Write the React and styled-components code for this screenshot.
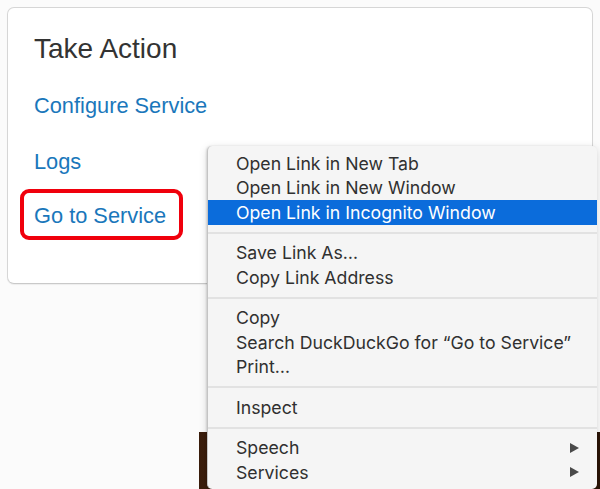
import React from 'react'
import styled, { createGlobalStyle } from 'styled-components';

const GlobalStyle = createGlobalStyle`
  html, body {
    margin: 0;
    padding: 0;
    background: #fbfbfb;
  }
  body {
    font-family: "Liberation Sans", Arial, sans-serif;
  }
`

const Canvas = styled.div`
  position: relative;
  width: 600px;
  height: 489px;
  overflow: hidden;
  padding: 7px 7px 0;
  box-sizing: border-box;
`

const Card = styled.div`
  width: 586px;
  height: 277px;
  box-sizing: border-box;
  background: #fff;
  border: 1px solid #d6d6d6;
  border-bottom-color: #c9c9c9;
  border-radius: 7px;
  box-shadow: 0 1px 1px rgba(0, 0, 0, 0.06);
  padding: 25px 26px 0;
  display: flex;
  flex-direction: column;
  align-items: flex-start;
`

const Title = styled.h3`
  margin: 0 0 29px;
  font-size: 28px;
  line-height: 32px;
  font-weight: 400;
  color: #333;
`

const ActionLink = styled.a`
  display: block;
  font-size: 21.8px;
  line-height: 24px;
  color: #1a77bb;
  text-decoration: none;
  margin-bottom: ${p => p.$gap || 0}px;
  ${p => p.$marked && `
    margin-left: -14px;
    margin-top: -16px;
    padding: 11px 13px 8px 10px;
    border: 4px solid #f0000c;
    border-radius: 9px;
  `}
`

const Backdrop = styled.div`
  position: absolute;
  left: 199px;
  top: 432px;
  width: 401px;
  height: 57px;
  background: linear-gradient(90deg, #3a1d0c, #6a3412 50%, #2a1407);
`

const Menu = styled.ul`
  position: absolute;
  left: 207px;
  top: 146px;
  width: 390px;
  margin: 0;
  padding: 5px 0 4px;
  list-style: none;
  background: #f5f5f5;
  border-left: 1px solid #c4c4c4;
  border-radius: 5px;
  box-shadow: -1px 0 2px rgba(0, 0, 0, 0.12), 0 2px 8px rgba(0, 0, 0, 0.15);
  box-sizing: border-box;
  font-family: Inter, "Liberation Sans", sans-serif;
`

const Item = styled.li`
  display: flex;
  align-items: center;
  justify-content: space-between;
  height: 24.5px;
  padding: 0 18px 0 28px;
  font-size: 17.7px;
  color: ${p => p.$active ? '#fff' : '#303030'};
  background: ${p => p.$active ? '#0b6cdb' : 'transparent'};
  white-space: nowrap;
`

const Separator = styled.li`
  height: 2px;
  margin: 7px 0;
  background: #e2e2e2;
`

const Arrow = styled.span`
  width: 0;
  height: 0;
  border-top: 5px solid transparent;
  border-bottom: 5px solid transparent;
  border-left: 9px solid #4a4a4a;
`

const groups = [
  ['Open Link in New Tab', 'Open Link in New Window', 'Open Link in Incognito Window'],
  ['Save Link As…', 'Copy Link Address'],
  ['Copy', 'Search DuckDuckGo for “Go to Service”', 'Print…'],
  ['Inspect'],
  ['Speech', 'Services'],
]

const submenus = ['Speech', 'Services']

const App = () =>
  <>
    <GlobalStyle />
    <Canvas>
      <Card>
        <Title>Take Action</Title>
        <ActionLink href="#" $gap={32}>Configure Service</ActionLink>
        <ActionLink href="#" $gap={31}>Logs</ActionLink>
        <ActionLink href="#" $marked>Go to Service</ActionLink>
      </Card>
      <Backdrop />
      <Menu>
        {groups.map((group, gi) =>
          <React.Fragment key={gi}>
            {gi > 0 && <Separator />}
            {group.map(label =>
              <Item key={label} $active={label === 'Open Link in Incognito Window'}>
                {label}
                {submenus.includes(label) && <Arrow />}
              </Item>
            )}
          </React.Fragment>
        )}
      </Menu>
    </Canvas>
  </>

export default App;
